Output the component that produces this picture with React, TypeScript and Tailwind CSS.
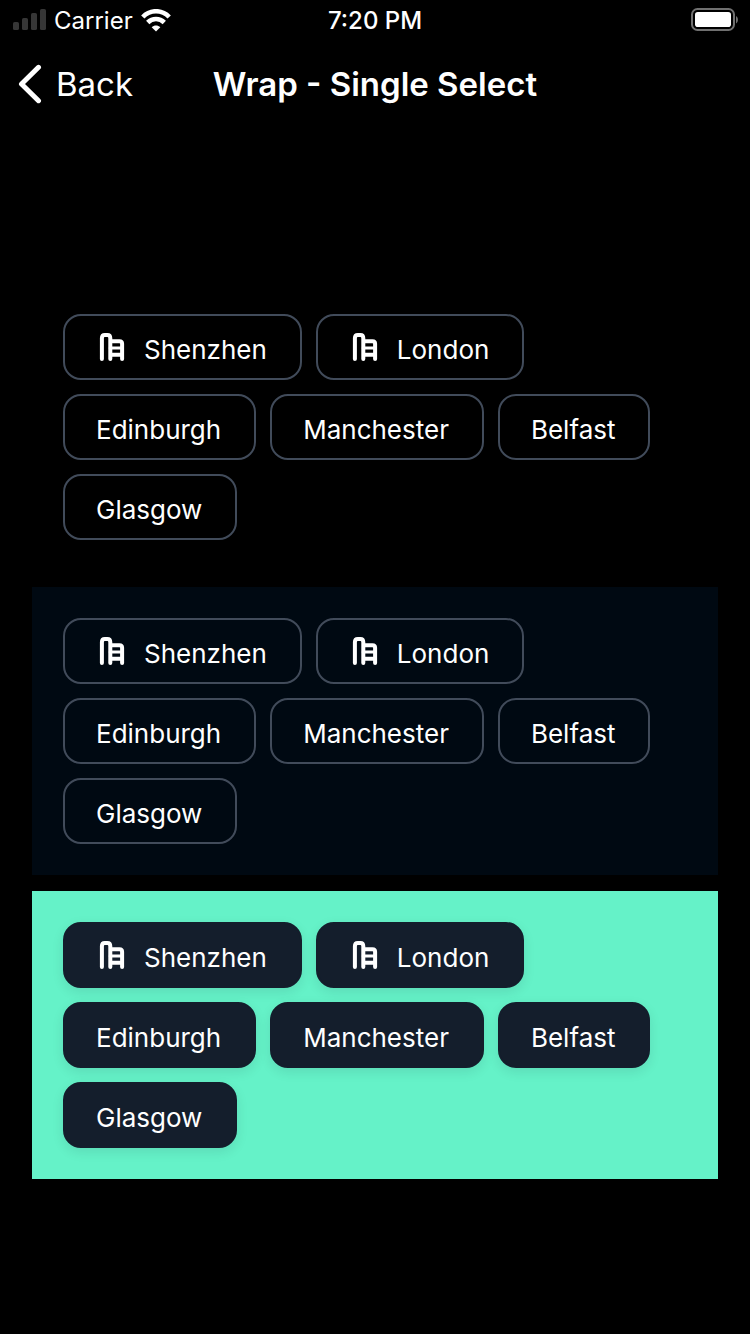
import React from "react";

type Variant = "outline" | "filled";

const cities = [
  { name: "Shenzhen", icon: true },
  { name: "London", icon: true },
  { name: "Edinburgh", icon: false },
  { name: "Manchester", icon: false },
  { name: "Belfast", icon: false },
  { name: "Glasgow", icon: false },
];

function SlideIcon() {
  return (
    <svg className="mr-3 size-9 shrink-0" viewBox="0 0 36 36" fill="none" stroke="currentColor" strokeLinecap="round" strokeLinejoin="round" aria-hidden="true">
      <path strokeWidth="4" d="M6.9 30V9.2C6.9 7 8 6 9.8 6h2.600c1.800 0 2.900 1 2.900 3.200V30M15.300 12.200h9.200c1.600 0 2.600 1 2.600 2.600V30M15.300 25.800h11.800" />
      <path strokeWidth="3.200" d="M15.300 19h11.800" />
    </svg>
  );
}

function StatusBar() {
  return (
    <div className="grid h-10 grid-cols-3 items-center px-3">
      <div className="flex items-center pt-px">
        <svg className="h-6 w-9 shrink-0" viewBox="0 0 36 24" fill="#363636" aria-hidden="true">
          <rect x="1" y="13" width="6" height="8" rx="1.600" />
          <rect x="10" y="9" width="6" height="12" rx="1.600" />
          <rect x="19" y="4" width="6" height="17" rx="1.600" />
          <rect x="28" y="0" width="6" height="21" rx="1.600" />
        </svg>
        <span className="ml-1.5 text-[24px]">Carrier</span>
        <svg className="ml-2 h-6 w-8 shrink-0" viewBox="0 0 32 24" fill="none" stroke="white" aria-hidden="true">
          <path strokeWidth="4.600" d="M1.800 8C9.200.3 20.800.3 28.200 8" />
          <path strokeWidth="4.600" d="M6.700 13.500c4.700-4.700 11.900-4.700 16.600 0" />
          <path fill="white" stroke="none" d="M15 22.500l-4.300-4.300c2.400-2.300 6.200-2.300 8.600 0z" />
        </svg>
      </div>
      <time className="pt-px text-center text-[24px] font-medium">7:20 PM</time>
      <svg className="h-6 w-12 justify-self-end" viewBox="0 0 48 24" role="img" aria-label="Battery full">
        <rect x="2" y="1" width="42" height="21" rx="5.500" fill="none" stroke="#707070" strokeWidth="2" />
        <rect x="5" y="4" width="36" height="15" rx="2.800" fill="white" />
        <path fill="#707070" d="M46 8c2.600 1.400 2.600 6 0 7.400z" />
      </svg>
    </div>
  );
}

function NavBar() {
  return (
    <header className="grid h-22 grid-cols-[1fr_auto_1fr] items-center px-4 text-[33px]">
      <button type="button" className="flex items-center gap-3 justify-self-start">
        <svg className="h-10 w-7 shrink-0" viewBox="0 0 28 40" fill="none" stroke="white" strokeWidth="5" strokeLinecap="round" strokeLinejoin="round" aria-hidden="true">
          <path d="M22.500 3.300L5.500 20l17 16.700" />
        </svg>
        <span className="pt-0.5">Back</span>
      </button>
      <h1 className="pt-0.5 font-semibold">Wrap - Single Select</h1>
    </header>
  );
}

function ChipGroup({ label, background, variant }: { label: string; background: string; variant: Variant }) {
  const look =
    variant === "outline"
      ? "border-[#414b5a]"
      : "border-[#141e2c] bg-[#141e2c] shadow-[0_4px_12px_rgba(20,30,44,0.10)]";
  return (
    <section aria-label={label} className={`flex flex-wrap gap-3.5 p-[31px] ${background}`}>
      {cities.map((city) => (
        <button key={city.name} type="button" className={`flex h-[66px] items-center rounded-[18px] border-2 pl-[30px] pr-8 ${look}`}>
          {city.icon && <SlideIcon />}
          <span className="px-px pt-1 text-[26px]">{city.name}</span>
        </button>
      ))}
    </section>
  );
}

export default function App() {
  return (
    <div className="min-h-screen bg-black font-['Inter',sans-serif] text-white">
      <StatusBar />
      <NavBar />
      <main className="flex flex-col gap-4 px-8 pt-[155px]">
        <ChipGroup label="Cities on default background" background="bg-black" variant="outline" />
        <ChipGroup label="Cities on dark background" background="bg-[#000912]" variant="outline" />
        <ChipGroup label="Cities on accent background" background="bg-[#65f2c8]" variant="filled" />
      </main>
    </div>
  );
}
